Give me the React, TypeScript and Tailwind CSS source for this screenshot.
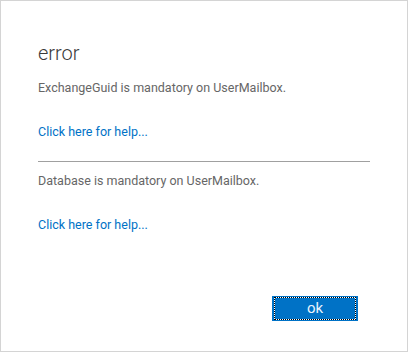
import React from "react";

export default function App() {
  return (
    <div className="box-border flex h-[352px] w-[408px] flex-col border border-[#d4d4d4] bg-white pl-[37px] pt-[38px] font-['Roboto',sans-serif]">
      <h1 className="h-[28px] text-[20px] font-light leading-[28px] text-[#3a3a3a]">error</h1>
      <p className="mt-[12px] h-[18px] text-[12.5px] leading-[18px] text-[#666666]">
        ExchangeGuid is mandatory on UserMailbox.
      </p>
      <a href="#" className="mt-[26px] block h-[18px] text-[12.5px] leading-[18px] text-[#0072c6]">
        Click here for help...
      </a>
      <div className="mt-[20px] h-px w-[332px] bg-[#a0a0a0]" />
      <p className="mt-[10px] h-[18px] text-[12.5px] leading-[18px] text-[#666666]">
        Database is mandatory on UserMailbox.
      </p>
      <a href="#" className="mt-[26px] block h-[18px] text-[12.5px] leading-[18px] text-[#0072c6]">
        Click here for help...
      </a>
      <div className="mt-[62px] flex justify-end pr-[49px]">
        <button className="relative h-[25px] w-[86px] bg-[#0072c6] text-[15px] leading-[25px] text-[#eaf4fc]">
          <span className="pointer-events-none absolute inset-x-[2px] inset-y-[1px] border border-white" />
          <span className="pointer-events-none absolute inset-x-[2px] inset-y-[1px] border border-dotted border-black" />
          <span className="relative">ok</span>
        </button>
      </div>
    </div>
  );
}
